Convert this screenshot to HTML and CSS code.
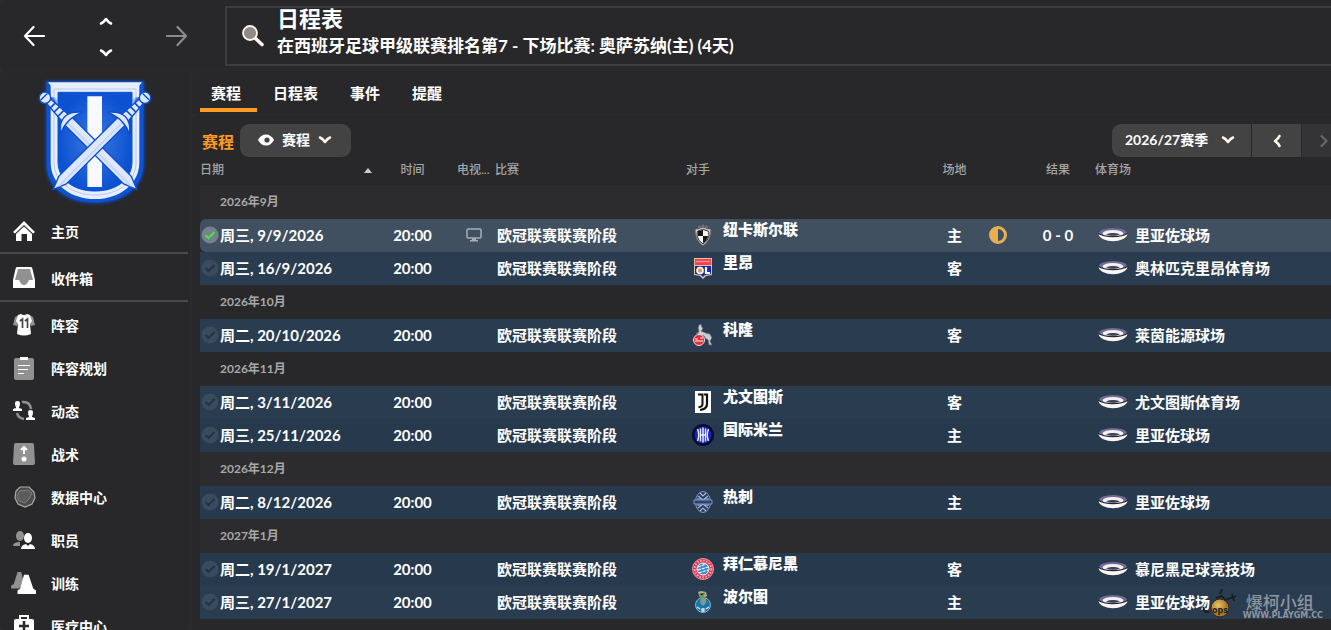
FILE: index.html
```html
<!DOCTYPE html>
<html lang="zh-CN">
<head>
<meta charset="utf-8">
<meta name="viewport" content="width=device-width, initial-scale=1">
<title>日程表</title>
<link rel="stylesheet" href="styles.css">
</head>
<body>
<svg class="defs" aria-hidden="true">
  <symbol id="stadium" viewBox="0 0 30 16">
    <ellipse cx="15" cy="6.500" rx="14" ry="5.500" fill="#706e98"/>
    <path d="M0.500 7C2 16.500 28 16.500 29.500 7Q15 12 0.500 7Z" fill="#fdf6f2"/>
    <ellipse cx="15" cy="6.500" rx="10.500" ry="3.500" fill="#f7eeee"/>
    <path d="M8 7.500Q11 5.500 15 6Q19 5.500 22 7.500Q15 10 8 7.500Z" fill="#3a4558"/>
    <path d="M0.500 6.500Q5 9.500 15 9.500Q25 9.500 29.500 6.500" fill="none" stroke="#22293a" stroke-width="1.300"/>
  </symbol>
  <symbol id="check" viewBox="0 0 18 18">
    <circle class="check-disc" cx="9" cy="9" r="8.500"/>
    <path class="check-mark" d="M4.500 9L7.500 12L13.500 6" fill="none" stroke-width="2"/>
  </symbol>
  <symbol id="down" viewBox="0 0 14 10"><path d="M2 2.500Q4.500 3.500 7 7Q9.500 3.500 12 2.500" fill="none" stroke="currentColor" stroke-width="2.600" stroke-linecap="round" stroke-linejoin="round"/></symbol>
  <symbol id="sword" viewBox="0 0 390 420" overflow="visible">
    <g transform="translate(45 80) rotate(45)" stroke="#0b4fd0" stroke-width="4" fill="#dfe8fb">
      <path d="M84-16H350L390 0L350 16H84Z"/>
      <path d="M86 5H370" stroke="#c3d4f7" stroke-width="5"/>
      <path d="M16-9L88-14V14L16 9Z"/>
      <path d="M33-10V10M50-12V12M67-13V13" stroke-width="5"/>
      <path d="M110-48Q54 0 110 44Q88 0 110-48Z"/>
      <circle r="17"/><path d="M-4-14V14" stroke-width="4"/>
    </g>
  </symbol>
</svg>

<div class="app">
  <header class="topbar">
    <nav class="history" aria-label="导航">
      <button class="icon-btn" aria-label="后退"><svg width="22" height="22" viewBox="0 0 22 22"><path d="M21 11H2M10.500 2L2 11L10.500 20" fill="none" stroke="#fff" stroke-width="2.200" stroke-linecap="round" stroke-linejoin="round"/></svg></button>
      <div class="steps">
        <button class="icon-btn" aria-label="上一个"><svg class="flip" width="14" height="10"><use href="#down"/></svg></button>
        <button class="icon-btn" aria-label="下一个"><svg width="14" height="10"><use href="#down"/></svg></button>
      </div>
      <button class="icon-btn" aria-label="前进"><svg width="22" height="22" viewBox="0 0 22 22"><path d="M1 11H20M11.500 2L20 11L11.500 20" fill="none" stroke="#8b8b8c" stroke-width="2.200" stroke-linecap="round" stroke-linejoin="round"/></svg></button>
    </nav>
    <div class="search">
      <button class="icon-btn" aria-label="搜索"><svg width="24" height="24" viewBox="0 0 24 24"><path d="M14 14L21 20.500" stroke="#fff5ea" stroke-width="3.600" stroke-linecap="round"/><circle cx="9" cy="9" r="7" fill="#8d8a87" stroke="#fff5ea" stroke-width="1.800"/></svg></button>
      <div class="search-text">
        <h1>日程表</h1>
        <p>在西班牙足球甲级联赛排名第7 - 下场比赛: 奥萨苏纳(主) (4天)</p>
      </div>
    </div>
  </header>

  <aside class="sidebar">
    <svg class="club" viewBox="0 0 390 420" role="img" aria-label="俱乐部队徽">
      <defs>
        <filter id="glow" x="-10%" y="-10%" width="120%" height="120%"><feGaussianBlur stdDeviation="5"/></filter>
        <radialGradient id="field"><stop offset="0" stop-color="#3f77e0"/><stop offset="1" stop-color="#0b52d2"/></radialGradient>
      </defs>
      <path d="M48 30H342V280C342 350 280 397 195 397C110 397 48 350 48 280Z" fill="#0a50d8" filter="url(#glow)"/>
      <path d="M50 32H340V275C340 345 280 393 195 393C110 393 50 345 50 275Z" fill="#0d53d6"/>
      <path d="M54 34H336L328 44V275C328 338 270 384 195 384C120 384 62 338 62 275V44Z" fill="#e6edfb"/>
      <path d="M72 54H318V275C318 330 265 372 195 372C125 372 72 330 72 275Z" fill="none" stroke="#b6caf1" stroke-width="3"/>
      <path d="M84 64H306V272C306 325 260 360 195 360C130 360 84 325 84 272Z" fill="url(#field)" stroke="#0b52d2" stroke-width="3"/>
      <path d="M172 76H216V348H172Z" fill="#f7f9fe"/>
      <g stroke="#0a50d8" stroke-width="34" stroke-linecap="round" filter="url(#glow)"><path d="M45 80L62 97M345 80L328 97"/></g>
      <use href="#sword"/>
      <use href="#sword" transform="translate(390 0) scale(-1 1)"/>
    </svg>
    <nav class="menu" aria-label="主菜单">
      <a class="item boxed" href="#"><svg viewBox="0 0 24 24"><path d="M1 13L12 2L23 13L21 14.500L12 6L3 14.500Z" fill="#fff"/><path d="M4 15L12 7.500L20 15V22H15V15H9.500V22H4Z" fill="#fff"/></svg>主页</a>
      <a class="item boxed" href="#"><svg viewBox="0 0 24 24"><path d="M5 1H19Q20 1 20.500 3L23 14V22H1V14L3.500 3Q4 1 5 1Z" fill="#fff"/><path d="M6 3H18L21 14H17Q15 19 12 19Q9 19 7 14H3Z" fill="#919192"/></svg>收件箱</a>
      <a class="item" href="#"><svg viewBox="0 0 24 24"><path d="M7 2L3 4L1 12L5 13L7 9Z M17 2L21 4L23 12L19 13L17 9Z" fill="#919192"/><path d="M6 2L9 1Q12 3 15 1L18 2L20 8L18 11L19 21Q12 24 5 21L6 11L4 8Z" fill="#fff"/><path d="M8 8L10.500 6V15M13 8L15.500 6V15" fill="none" stroke="#444" stroke-width="1.700"/></svg>阵容</a>
      <a class="item" href="#"><svg viewBox="0 0 24 24"><rect x="2" y="2" width="20" height="22" rx="2" fill="#919192"/><path d="M8 1H16V4H8ZM6 9H18V10H6ZM6 13H16V14H6ZM6 17H12V18H6Z" fill="#fff"/></svg>阵容规划</a>
      <a class="item" href="#"><svg viewBox="0 0 24 24"><path d="M10 3Q18 2 19 10M5 14Q6 19 12 20" fill="none" stroke="#919192" stroke-width="2.500"/><path d="M3 4Q3 2 5.500 2Q8 2 8 4Q8 7 7 8V9L10 10V12H1V10L4 9V8Q3 7 3 4ZM16 13Q16 11 18.500 11Q21 11 21 13Q21 16 20 17V18L23 19V21H14V19L17 18V17Q16 16 16 13Z" fill="#fff"/></svg>动态</a>
      <a class="item" href="#"><svg viewBox="0 0 24 24"><path d="M4 1H20Q22 1 22 3L23 21Q23 23 21 23H3Q1 23 1 21L2 3Q2 1 4 1Z" fill="#919192"/><path d="M12 12V5M9 8L12 5L15 8" fill="none" stroke="#fff" stroke-width="2"/><circle cx="12" cy="17" r="2.500" fill="#fff"/></svg>战术</a>
      <a class="item" href="#"><svg viewBox="0 0 24 24"><path d="M8 2H17L22 7L23 13L20 19L13 22L6 19L3 13L4 6Z" fill="#4c4c4d" stroke="#aaa" stroke-width="1.200"/><path d="M8 6L16 5L20 8L17 14L13 18L7 16L5 11Z" fill="#5c5c5d" stroke="#888" stroke-width=".8"/></svg>数据中心</a>
      <a class="item" href="#"><svg viewBox="0 0 24 24"><ellipse cx="8" cy="8" rx="4" ry="5" fill="#919192"/><path d="M1 18Q1 14 8 14V18Z" fill="#919192"/><ellipse cx="16" cy="10" rx="4" ry="5" fill="#fff"/><path d="M9 21Q9 17 14 16L16 18L18 16Q23 17 23 21Z" fill="#fff"/></svg>职员</a>
      <a class="item" href="#"><svg class="wide" viewBox="0 0 28 26"><path d="M7 1H11L15 17L8 19H0V16L3 14Z" fill="#919192"/><path d="M14 4H19L24 19L27 21V25H7V21L10 19Z" fill="#fff"/></svg>训练</a>
      <a class="item" href="#"><svg viewBox="0 0 24 24"><path d="M8 5V2H16V5" fill="none" stroke="#fff" stroke-width="2"/><rect x="2" y="5" width="20" height="19" rx="2" fill="#fff"/><path d="M12 7V17M7 12H17" stroke="#28282a" stroke-width="2.600"/></svg>医疗中心</a>
    </nav>
  </aside>

  <main class="main">
    <nav class="tabs" aria-label="日程表页面">
      <a class="tab active" href="#">赛程</a>
      <a class="tab" href="#">日程表</a>
      <a class="tab" href="#">事件</a>
      <a class="tab" href="#">提醒</a>
    </nav>
    <section class="panel">
      <div class="toolbar">
        <h2>赛程</h2>
        <label class="picker view">
          <svg width="16" height="12" viewBox="0 0 16 12"><path d="M0 6Q3 0.500 8 0.500Q13 0.500 16 6Q13 11.500 8 11.500Q3 11.500 0 6Z" fill="#fff"/><circle cx="9" cy="6" r="2.600" fill="#434343"/></svg>
          <select aria-label="视图"><option>赛程</option></select>
          <svg class="arrow" width="14" height="10"><use href="#down"/></svg>
        </label>
        <div class="season">
          <label class="picker">
            <select aria-label="赛季"><option>2026/27赛季</option></select>
            <svg class="arrow" width="14" height="10"><use href="#down"/></svg>
          </label>
          <button class="page" aria-label="上一赛季"><svg width="10" height="14" viewBox="0 0 10 14"><path d="M7.500 2Q6.500 4.500 3 7Q6.500 9.500 7.500 12" fill="none" stroke="#fff5ea" stroke-width="2.600" stroke-linecap="round" stroke-linejoin="round"/></svg></button>
          <button class="page off" aria-label="下一赛季" disabled><svg width="10" height="14" viewBox="0 0 10 14"><path d="M2.500 2L7.500 7L2.500 12" fill="none" stroke="#6c6c6d" stroke-width="2" stroke-linecap="round"/></svg></button>
        </div>
      </div>

      <table class="fixtures">
        <colgroup><col class="c-date"><col class="c-time"><col class="c-tv"><col class="c-comp"><col class="c-opp"><col class="c-venue"><col class="c-kick"><col class="c-result"><col></colgroup>
        <thead>
          <tr><th><span class="sort">日期<svg width="8" height="5" viewBox="0 0 8 5"><path d="M4 0L8 5H0Z" fill="#ccc"/></svg></span></th><th class="mid">时间</th><th class="tv">电视...</th><th>比赛</th><th>对手</th><th class="mid">场地</th><th></th><th class="mid">结果</th><th>体育场</th></tr>
        </thead>
        <tbody>
          <tr class="month"><th colspan="9">2026年9月</th></tr>
          <tr class="match selected">
            <td><span class="date"><svg><use href="#check"/></svg>周三, 9/9/2026</span></td><td class="mid">20:00</td>
            <td class="tv"><svg width="16" height="14" viewBox="0 0 16 14"><rect x="1" y="1" width="14" height="9" rx="1" fill="none" stroke="#a5adb5" stroke-width="1.500"/><path d="M6 10H10V12H12V13.500H4V12H6Z" fill="#a5adb5"/></svg></td>
            <td class="comp">欧冠联赛联赛阶段</td>
            <td><span class="team"><svg viewBox="0 0 22 22"><path d="M6 3L8 1L9 3L11 0L13 3L14 1L16 3V5H6Z" fill="#777"/><path d="M3 5Q7 5 11 3Q15 5 19 5Q20 16 11 22Q2 16 3 5Z" fill="#ccc" stroke="#555"/><path d="M6 7L11 6V12H6ZM11 12H16Q15 17 11 19Z" fill="#171717"/><path d="M11 6L16 7V12H11ZM6 12H11V19Q7 17 6 12Z" fill="#f4f4f4"/><path d="M5 12Q5 7 6 7L11 5.500L16 7Q17 7 17 12Q16 17 11 20Q6 17 5 12Z" fill="none" stroke="#333"/></svg><b>纽卡斯尔联</b></span></td>
            <td class="mid">主</td>
            <td class="mid"><svg class="evening" width="18" height="18" viewBox="0 0 18 18"><circle cx="9" cy="9" r="7.500" fill="none" stroke="#e4b052" stroke-width="3"/><path d="M9 1V17A8 8 0 0 1 9 1Z" fill="#e4b052"/></svg></td>
            <td class="mid">0 - 0</td>
            <td><span class="ground"><svg><use href="#stadium"/></svg>里亚佐球场</span></td>
          </tr>
          <tr class="match">
            <td><span class="date"><svg><use href="#check"/></svg>周三, 16/9/2026</span></td><td class="mid">20:00</td><td></td><td class="comp">欧冠联赛联赛阶段</td>
            <td><span class="team"><svg viewBox="0 0 22 22"><path d="M2 1H20V18L14 19L11 22L8 19L2 18Z" fill="#e5c29b"/><path d="M3 2H19V8H3Z" fill="#ee4055"/><path d="M4 4.500H18" stroke="#f78b92" stroke-width="1.500"/><path d="M3 9H19V17L13 18L11 20L9 18L3 17Z" fill="#142bad"/><circle cx="8" cy="13.500" r="3" fill="#d7a04e" stroke="#fff" stroke-width="1.600"/><path d="M14 10V16H18" fill="none" stroke="#fff" stroke-width="2.200"/></svg><b>里昂</b></span></td>
            <td class="mid">客</td><td></td><td></td><td><span class="ground"><svg><use href="#stadium"/></svg>奥林匹克里昂体育场</span></td>
          </tr>
          <tr class="month"><th colspan="9">2026年10月</th></tr>
          <tr class="match">
            <td><span class="date"><svg><use href="#check"/></svg>周二, 20/10/2026</span></td><td class="mid">20:00</td><td></td><td class="comp">欧冠联赛联赛阶段</td>
            <td><span class="team"><svg viewBox="0 0 22 22"><path d="M6 4L7 1L9 0L10 3L11 5L9 7L14 9L18 10L20 14L18 17L20 21H17L16 16L13 14L12 12L8 11L4 9L7 8Z" fill="#c9ced2" stroke="#59626b" stroke-width=".8"/><circle cx="7" cy="16" r="5.500" fill="#e22b3b" stroke="#f3dfe1"/><path d="M3 15H6M8 14H11M3 17H11" stroke="#fff" stroke-width="1.200"/></svg><b>科隆</b></span></td>
            <td class="mid">客</td><td></td><td></td><td><span class="ground"><svg><use href="#stadium"/></svg>莱茵能源球场</span></td>
          </tr>
          <tr class="month"><th colspan="9">2026年11月</th></tr>
          <tr class="match">
            <td><span class="date"><svg><use href="#check"/></svg>周二, 3/11/2026</span></td><td class="mid">20:00</td><td></td><td class="comp">欧冠联赛联赛阶段</td>
            <td><span class="team"><svg viewBox="0 0 22 22"><path d="M3 0H19V22H3Z" fill="#fff"/><path d="M6 3.500H10.500V13Q10.500 16 6.500 16" fill="none" stroke="#111" stroke-width="2"/><path d="M12 3.500H15V13Q15 18 8 19" fill="none" stroke="#111" stroke-width="2.200"/></svg><b>尤文图斯</b></span></td>
            <td class="mid">客</td><td></td><td></td><td><span class="ground"><svg><use href="#stadium"/></svg>尤文图斯体育场</span></td>
          </tr>
          <tr class="match">
            <td><span class="date"><svg><use href="#check"/></svg>周三, 25/11/2026</span></td><td class="mid">20:00</td><td></td><td class="comp">欧冠联赛联赛阶段</td>
            <td><span class="team"><svg viewBox="0 0 22 22"><circle cx="11" cy="11" r="11" fill="#050b35"/><circle cx="11" cy="11" r="8.500" fill="#1724b8"/><path d="M11 3.500V18.500M8.500 4.500V17.500M13.500 4.500V17.500M8 11H14" stroke="#e8ebfa" stroke-width="1.500"/><path d="M5.500 5Q8 11 5.500 17M16.500 5Q14 11 16.500 17" fill="none" stroke="#e8ebfa" stroke-width="1.500"/></svg><b>国际米兰</b></span></td>
            <td class="mid">主</td><td></td><td></td><td><span class="ground"><svg><use href="#stadium"/></svg>里亚佐球场</span></td>
          </tr>
          <tr class="month"><th colspan="9">2026年12月</th></tr>
          <tr class="match">
            <td><span class="date"><svg><use href="#check"/></svg>周二, 8/12/2026</span></td><td class="mid">20:00</td><td></td><td class="comp">欧冠联赛联赛阶段</td>
            <td><span class="team"><svg viewBox="0 0 22 22"><ellipse cx="11" cy="11" rx="7.500" ry="10.500" fill="#293a6a" stroke="#8494b4"/><path d="M6 5L11 9L16 5M8 2L11 5L14 2M6 17L11 13L16 17M8 20L11 17L14 20M5 8H9M13 8H17M5 14H9M13 14H17" fill="none" stroke="#aeb9cb" stroke-width="1.200"/><path d="M2 9H20V13H2Z" fill="#294477" stroke="#8d9bb8" stroke-width=".9"/></svg><b>热刺</b></span></td>
            <td class="mid">主</td><td></td><td></td><td><span class="ground"><svg><use href="#stadium"/></svg>里亚佐球场</span></td>
          </tr>
          <tr class="month"><th colspan="9">2027年1月</th></tr>
          <tr class="match">
            <td><span class="date"><svg><use href="#check"/></svg>周二, 19/1/2027</span></td><td class="mid">20:00</td><td></td><td class="comp">欧冠联赛联赛阶段</td>
            <td><span class="team"><svg viewBox="0 0 22 22"><circle cx="11" cy="11" r="10.500" fill="#e9304c" stroke="#dca3ad"/><circle cx="11" cy="11" r="8.300" fill="none" stroke="#ffc5cb" stroke-width="1.800" stroke-dasharray="1.500 1.500"/><circle cx="11" cy="11" r="6" fill="#2e91d2" stroke="#fff"/><path d="M6 9L14 6M6 12L16 9M7 15L16 12" stroke="#fff" stroke-width="1.200" stroke-dasharray="3 1"/></svg><b>拜仁慕尼黑</b></span></td>
            <td class="mid">客</td><td></td><td></td><td><span class="ground"><svg><use href="#stadium"/></svg>慕尼黑足球竞技场</span></td>
          </tr>
          <tr class="match">
            <td><span class="date"><svg><use href="#check"/></svg>周三, 27/1/2027</span></td><td class="mid">20:00</td><td></td><td class="comp">欧冠联赛联赛阶段</td>
            <td><span class="team"><svg viewBox="0 0 22 22"><circle cx="11" cy="14" r="7.500" fill="#1674af" stroke="#8db4c9"/><path d="M6 1L9 0L14 1L15 5L12 7H8Z" fill="#c9a57e"/><path d="M7 3L10 5L13 2M8 6L13 6" stroke="#4b9b6d" stroke-width="1.400"/><path d="M9 7H14V12L11 15L8 12Z" fill="#6ea37d"/><path d="M9 8L13 12M13 8L9 12" stroke="#d77962"/><path d="M5 16L8 18M17 16L14 18M10 18H12V20H10Z" stroke="#d9edf6" stroke-width="1.300"/></svg><b>波尔图</b></span></td>
            <td class="mid">主</td><td></td><td></td><td><span class="ground"><svg><use href="#stadium"/></svg>里亚佐球场</span></td>
          </tr>
        </tbody>
      </table>
    </section>
  </main>

  <div class="mark">
    <svg width="36" height="32" viewBox="0 0 36 32"><defs><radialGradient id="ball" cx="40%" cy="35%"><stop offset="0" stop-color="#e9c566"/><stop offset="1" stop-color="#a97322"/></radialGradient></defs><path d="M14 9L20 7L23 11L31 8M30 5L32 12M34 7L29 9M20 0L18 5M2 18Q0 23 7 23" fill="none" stroke="#191c22" stroke-width="1.800"/><circle cx="18" cy="19" r="9" fill="url(#ball)" stroke="#2b2a27"/><text x="10" y="24" class="bomb-text">ops</text></svg>
    <div class="mark-text"><span class="mark-name">爆柯小组</span><span class="mark-url">WWW.PLAYGM.CC</span></div>
  </div>
</div>
</body>
</html>
```
FILE: styles.css
```css
* { box-sizing: border-box; }

body {
  margin: 0;
  background: #2b2b2c;
  color: #fff;
  font-family: Lato, "Noto Sans CJK SC", sans-serif;
  font-size: 15px;
  font-weight: 700;
}

h1, h2, p { margin: 0; }
a { color: inherit; text-decoration: none; }
svg { display: block; flex: none; }
button, select { font: inherit; color: inherit; border: 0; background: none; padding: 0; }

.defs { position: absolute; width: 0; height: 0; }

.app {
  position: relative;
  display: grid;
  grid-template-columns: 190px minmax(0, 1fr);
  grid-template-rows: 70px minmax(0, 1fr);
  gap: 1px 2px;
  height: 100vh;
  overflow: hidden;
}

.topbar {
  grid-column: 1 / -1;
  display: flex;
  background: #28282a;
  border-radius: 6px 0 0 6px;
}
.history {
  display: flex;
  align-items: center;
  justify-content: space-between;
  width: 225px;
  padding: 2px 37px 0 23px;
}
.steps { display: flex; flex-direction: column; gap: 22px; padding-top: 2px; }
.icon-btn { display: block; }
.flip { transform: rotate(180deg); }

.search {
  flex: 1;
  display: flex;
  align-items: center;
  gap: 12px;
  margin: 6px 0 4px;
  padding-left: 14px;
  border: 2px solid #3d3d3f;
  border-right: 0;
  white-space: nowrap;
}
.search-text { padding-bottom: 8px; }
.search h1 { font-size: 22px; line-height: 28px; }
.search p { font-size: 17px; line-height: 26px; }

.sidebar {
  background: #28282a;
  border-radius: 6px;
  overflow: hidden;
}
.club { width: 130px; height: 140px; margin-left: 30px; }
.menu { display: flex; flex-direction: column; margin-right: 2px; }
.item {
  display: flex;
  align-items: center;
  gap: 15px;
  height: 43px;
  padding-left: 12px;
  font-size: 14px;
}
.item svg { width: 24px; height: 24px; }
.item .wide { width: 28px; margin: 0 -2px; }
.boxed { height: 48px; padding-top: 2px; border-bottom: 2px solid #4a4a4c; }
.boxed:first-child { height: 43px; padding-top: 0; padding-bottom: 2px; }
.boxed + .item:not(.boxed) { margin-top: 1px; }

.main { display: flex; flex-direction: column; min-width: 0; overflow: hidden; gap: 1px; }
.tabs {
  display: flex;
  gap: 16px;
  height: 43px;
  padding: 4px 8px 2px;
  background: #28282a;
  border-radius: 6px 0 0 0;
}
.tab { padding: 0 8px; line-height: 36px; }
.tab.active {
  padding: 0 16px 0 11px;
  margin-right: -8px;
  background: linear-gradient(#ff9d26, #ff9d26) bottom / 100% 4px no-repeat;
}

.panel {
  flex: 1;
  padding: 9px 0 0 8px;
  background: #28282a;
  border-radius: 6px 0 0 0;
}
.toolbar { display: flex; gap: 6px; height: 33px; margin-left: 2px; }
.toolbar h2 { color: #ff9a24; font-size: 16px; line-height: 36px; }
.picker {
  display: flex;
  align-items: center;
  gap: 8px;
  height: 33px;
  padding: 0 19px 2px 18px;
  background: #434343;
  font-size: 14px;
}
.picker select { appearance: none; line-height: 20px; }
.picker .arrow { color: #fff5ea; }
.view { border-radius: 9px; }
.season { display: flex; gap: 1px; margin-left: auto; }
.season .picker { gap: 12px; padding: 0 16px 2px 13px; border-radius: 9px 0 0 9px; }
.page { display: flex; align-items: center; justify-content: center; width: 49px; background: #434343; }
.page.off { width: 29px; padding-left: 15px; background: #343436; }

.fixtures {
  width: 100%;
  table-layout: fixed;
  border-collapse: separate;
  border-spacing: 0;
  white-space: nowrap;
}
.c-date { width: 180px; }
.c-time { width: 65px; }
.c-tv { width: 50px; }
.c-comp { width: 191px; }
.c-opp { width: 248px; }
.c-venue { width: 41px; }
.c-kick { width: 46px; }
.c-result { width: 74px; }
.fixtures th, .fixtures td { padding: 0; text-align: left; }
.fixtures .mid { text-align: center; }
.fixtures thead th { height: 28px; padding-bottom: 2px; color: #a5a5a6; font-size: 12px; font-weight: 500; line-height: 16px; }
.fixtures thead .tv { padding-left: 12px; }
.sort { display: flex; align-items: center; justify-content: space-between; padding-right: 8px; }
.fixtures .month th { height: 34px; padding-left: 20px; color: #a8a8a9; font-size: 12px; line-height: 16px; }
.fixtures .match td { height: 33px; padding-bottom: 2px; line-height: 20px; }
.fixtures tbody tr:nth-child(odd) { background: #2c2c2e; }
.fixtures tbody .match { background: #26394d; }
.fixtures tbody .match:nth-child(odd) { background: #2a3c50; }
.fixtures tbody .selected { background: #405060; }
.fixtures .selected td:first-child { border-radius: 6px 0 0 6px; }
.fixtures .comp { padding-left: 2px; }
.fixtures .match .tv { padding-left: 21px; }
.evening { margin: 0 auto; }

.date { display: flex; align-items: center; gap: 1px; padding-left: 1px; }
.date svg { width: 18px; height: 18px; --disc: #3a4b5d; --mark: #213447; }
.selected .date svg { --disc: #76818c; --mark: #4be04b; }
.check-disc { fill: var(--disc); }
.check-mark { stroke: var(--mark); }

.team { display: flex; align-items: center; gap: 9px; padding-left: 6px; }
.team svg { width: 22px; height: 22px; }
.team b { padding-bottom: 11px; }
.ground { display: flex; align-items: center; gap: 7px; padding-left: 3px; }
.ground svg { width: 30px; height: 16px; }

.mark {
  position: absolute;
  right: 8px;
  bottom: 9px;
  display: flex;
  align-items: flex-end;
  gap: 5px;
  color: #8d959d;
}
.mark-text { display: flex; flex-direction: column; }
.mark-name { padding-left: 3px; font: 500 17px/18px "Noto Sans CJK SC", sans-serif; }
.mark-url { font: 700 8px/10px "DejaVu Sans", sans-serif; }
.bomb-text { font: 700 8px "DejaVu Sans", sans-serif; fill: #222; }
```
